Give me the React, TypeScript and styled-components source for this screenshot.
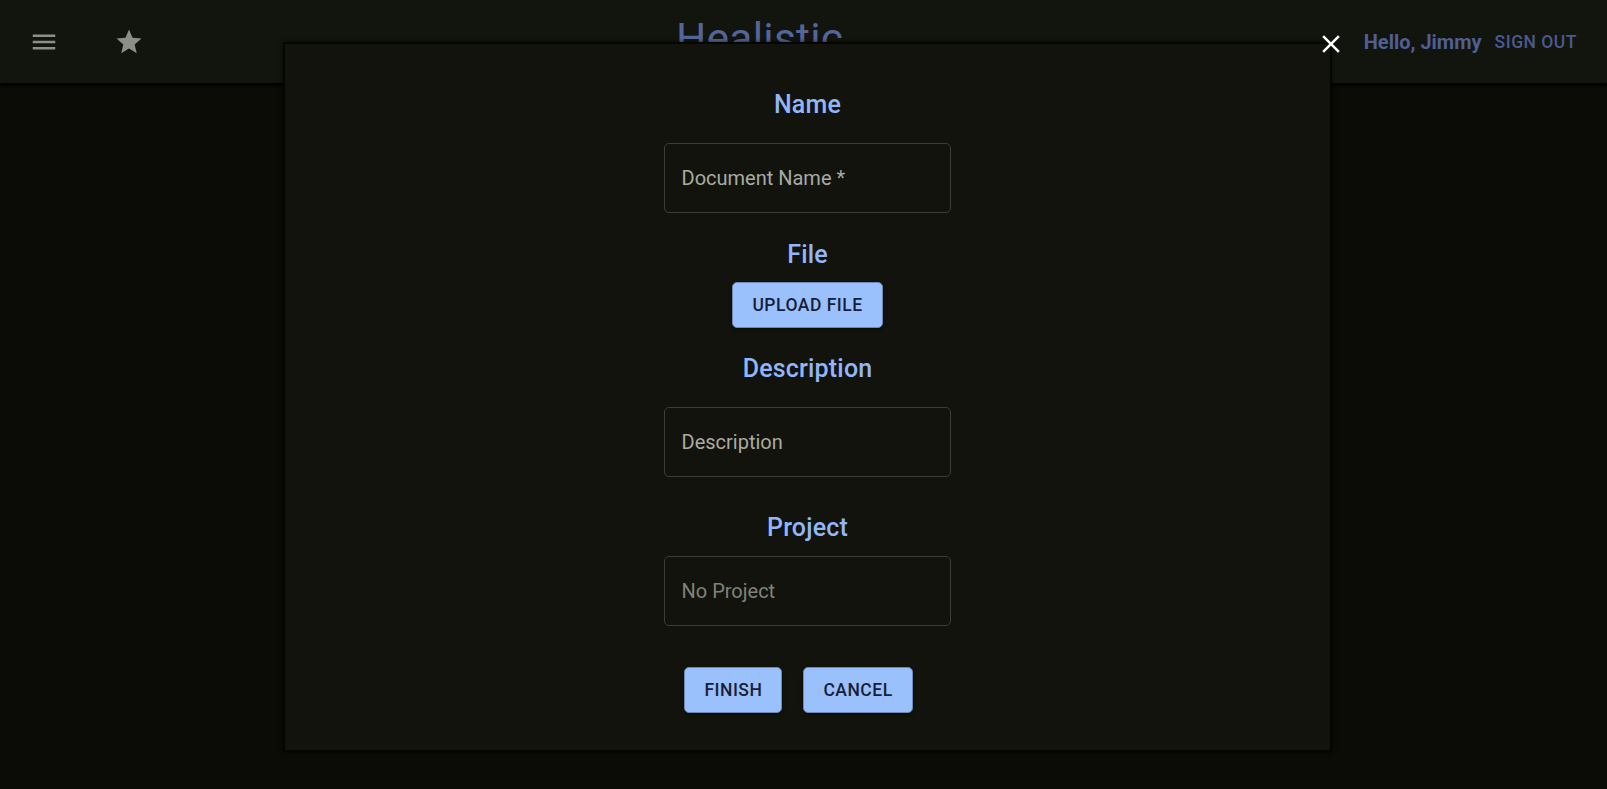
import React from "react";
import styled, { createGlobalStyle } from "styled-components";
import { MdMenu, MdStar, MdClose } from "react-icons/md";

const Global = createGlobalStyle`
  html, body { margin: 0; padding: 0; }
  body {
    background: #0a0c05;
    font-family: Roboto, "Liberation Sans", Arial, sans-serif;
    min-height: 789px;
    overflow: hidden;
  }
  * { box-sizing: border-box; }
`;

const Page = styled.div`
  position: relative;
  width: 1607px;
  height: 789px;
  background: #0a0c05;
`;

const Header = styled.header`
  height: 83px;
  background: #12140e;
  display: flex;
  align-items: center;
  padding: 0 20px 0 14px;
  box-shadow: 0 2px 2px rgba(0, 0, 0, 0.9), 0 3px 3px rgba(0, 0, 0, 0.5);
`;

const IconBtn = styled.button<{ $gap?: number }>`
  width: 60px;
  height: 60px;
  border: none;
  background: transparent;
  color: #8a8f87;
  display: flex;
  align-items: center;
  justify-content: center;
  padding: 0;
  margin-right: ${(p) => p.$gap ?? 0}px;
  cursor: pointer;
`;

const Title = styled.h1`
  flex: 1;
  margin: 0 0 4px 0;
  padding-left: 517px;
  font-size: 42.5px;
  font-weight: 400;
  line-height: 1.235;
  color: #55659b;
  letter-spacing: 0.25px;
`;

const Hello = styled.span`
  font-size: 20px;
  font-weight: 700;
  color: #4f5f94;
`;

const SignOut = styled.button`
  margin-left: 3px;
  border: none;
  background: transparent;
  color: #4a5a8e;
  font-family: inherit;
  font-size: 17.5px;
  font-weight: 500;
  letter-spacing: 0.02857em;
  text-transform: uppercase;
  padding: 8px 10px;
`;

const Modal = styled.div`
  position: absolute;
  left: 283px;
  top: 42px;
  width: 1049px;
  height: 710px;
  background: #11130c;
  border: 2px solid #050602;
  box-shadow: 0 0 4px rgba(0, 0, 0, 0.7);
  display: flex;
  flex-direction: column;
  align-items: center;
  padding-top: 40.5px;
`;

const CloseBtn = styled.button`
  position: absolute;
  left: 1316px;
  top: 29px;
  width: 30px;
  height: 30px;
  padding: 0;
  border: none;
  background: transparent;
  color: #ffffff;
  display: flex;
  align-items: center;
  justify-content: center;
`;

const Heading = styled.h6<{ $mt: number }>`
  margin: ${(p) => p.$mt}px 0 0 0;
  font-size: 25px;
  font-weight: 500;
  line-height: 40px;
  letter-spacing: 0.0075em;
  color: #92b6fa;
  text-align: center;
`;

const Field = styled.div<{ $mt: number }>`
  margin-top: ${(p) => p.$mt}px;
  width: 287px;
  height: 70px;
  border: 1px solid #3b3e36;
  border-radius: 5px;
  display: flex;
  align-items: center;
  padding-left: 16.5px;
`;

const Placeholder = styled.span<{ $dim?: boolean }>`
  font-size: 20px;
  color: ${(p) => (p.$dim ? "#808279" : "#a9aba2")};
`;

const Button = styled.button<{ $mt?: number }>`
  margin-top: ${(p) => p.$mt ?? 0}px;
  height: 46px;
  padding: 0 19px;
  border: 1px solid #6f86b8;
  border-radius: 5px;
  background: #9bc1fd;
  color: #17203a;
  font-family: inherit;
  font-size: 17.5px;
  font-weight: 500;
  letter-spacing: 0.02857em;
  text-transform: uppercase;
  box-shadow: 0px 3px 1px -2px rgba(0, 0, 0, 0.2), 0px 2px 2px 0px rgba(0, 0, 0, 0.14),
    0px 1px 5px 0px rgba(0, 0, 0, 0.12);
`;

const Actions = styled.div`
  margin-top: 41px;
  display: flex;
  gap: 21px;
  padding-right: 18px;
`;

export default function App() {
  return (
    <Page>
      <Global />
      <Header>
        <IconBtn $gap={25} aria-label="menu">
          <MdMenu size={30} />
        </IconBtn>
        <IconBtn aria-label="favorites">
          <MdStar size={30} />
        </IconBtn>
        <Title>Healistic</Title>
        <Hello>Hello, Jimmy</Hello>
        <SignOut>Sign out</SignOut>
      </Header>
      <Modal>
        <Heading $mt={0}>Name</Heading>
        <Field $mt={18.5}>
          <Placeholder>Document Name *</Placeholder>
        </Field>
        <Heading $mt={21.5}>File</Heading>
        <Button $mt={7.5}>Upload File</Button>
        <Heading $mt={20.5}>Description</Heading>
        <Field $mt={18.5}>
          <Placeholder>Description</Placeholder>
        </Field>
        <Heading $mt={30.5}>Project</Heading>
        <Field $mt={8.5}>
          <Placeholder $dim>No Project</Placeholder>
        </Field>
        <Actions>
          <Button>Finish</Button>
          <Button>Cancel</Button>
        </Actions>
      </Modal>
      <CloseBtn aria-label="close">
        <MdClose size={30} />
      </CloseBtn>
    </Page>
  );
}
